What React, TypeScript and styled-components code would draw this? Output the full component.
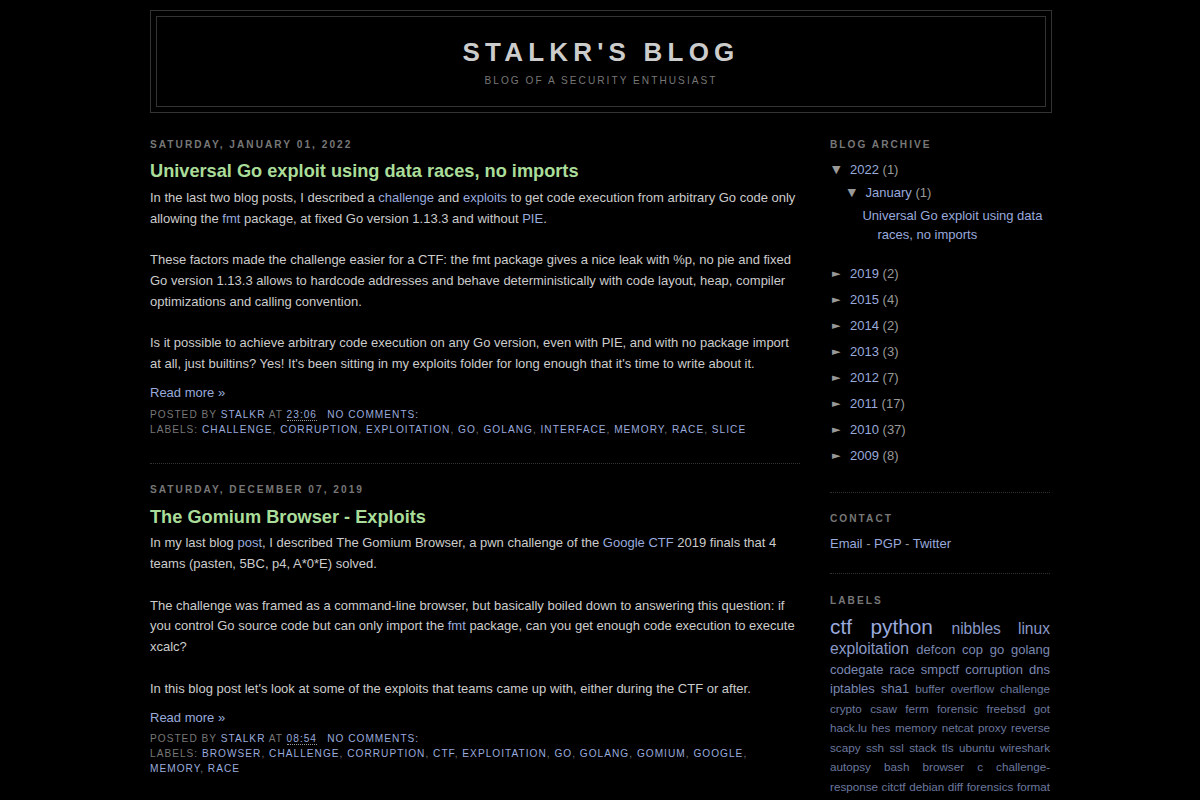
import React from "react";
import styled, { createGlobalStyle, css } from "styled-components";

const GlobalStyle = createGlobalStyle`
  html, body { margin: 0; padding: 0; background: #000; }
  body {
    color: #ccc;
    font-family: "Liberation Sans", Arial, sans-serif;
    font-size: 13px;
  }
  * { box-sizing: content-box; }
`;

const Page = styled.div`
  width: 900px;
  margin: 0 auto;
  padding: 10px;
  text-align: left;
`;

const HeaderWrapper = styled.header`
  width: 900px;
  margin: 0 0 9px;
  border: 1px solid #333;
`;

const HeaderInner = styled.div`
  margin: 5px;
  border: 1px solid #333;
  text-align: center;
  color: #ccc;
`;

const BlogTitle = styled.h1`
  margin: 5px 5px 0;
  padding: 15px 20px 6px;
  font-family: "Liberation Sans", Arial, sans-serif;
  font-size: 26px;
  font-weight: bold;
  line-height: 1.2em;
  letter-spacing: 0.2em;
  text-transform: uppercase;
  color: #ccc;
`;

const Description = styled.p`
  margin: 0 5px 5px;
  padding: 0 20px 13px;
  font-size: 10.14px;
  line-height: 1.4em;
  letter-spacing: 0.2em;
  text-transform: uppercase;
  color: #777;
`;

const Columns = styled.div`
  display: flex;
  justify-content: space-between;
  align-items: flex-start;
`;

const Main = styled.main`
  width: 650px;
`;

const Sidebar = styled.aside`
  width: 220px;
  color: #999;
  line-height: 1.5em;
`;

const DateHeader = styled.h2`
  margin: 1.5em 0 0.5em;
  font-size: 10.14px;
  font-weight: bold;
  line-height: 1.4em;
  letter-spacing: 0.2em;
  text-transform: uppercase;
  color: #777;
`;

const Post = styled.article`
  margin: 0.5em 0 1.5em;
  padding-bottom: 1.5em;
  border-bottom: 1px dotted #333;
`;

const PostTitle = styled.h3`
  margin: 0.25em 0 0;
  padding: 1px 0 3px;
  font-size: 18.2px;
  font-weight: bold;
  line-height: 1.4em;
  color: #aadd99;
`;

const PostBody = styled.div`
  margin: 0 0 0.75em;
  line-height: 1.6em;
`;

const Para = styled.p`
  margin: 0 0 1.6em;
  &:last-of-type { margin-bottom: 0; }
`;

const JumpLink = styled.div`
  margin-top: 8px;
`;

const Link = styled.a`
  color: #99aadd;
  text-decoration: none;
  cursor: pointer;
  &:hover { color: #aadd99; text-decoration: underline; }
`;

const PostFooter = styled.div`
  margin: -7px 0 6.5px;
  font-size: 10.14px;
  line-height: 15px;
  letter-spacing: 0.1em;
  text-transform: uppercase;
  color: #777;
`;

const FooterLine = styled.div``;

const Stamp = styled.abbr`
  text-decoration: none;
  border-bottom: 1px dotted #999;
`;

const CommentLink = styled(Link)`
  margin-left: 1em;
`;

const WidgetBox = styled.section`
  margin: 0 0 1.5em;
  padding: 0 0 1.5em;
  border-bottom: 1px dotted #333;
`;

const WidgetTitle = styled(DateHeader)`
  margin: 1.5em 0 0.75em;
`;

const ArchiveList = styled.ul`
  margin: 0;
  padding: 0;
  list-style: none;
`;

const ArchiveItem = styled.li<{ $level: 0 | 1 | 2 }>`
  margin: 0.25em 0;
  padding: 0 0 0.25em 15px;
  text-indent: -15px;
  line-height: 19.5px;
  ${(p) =>
    p.$level === 0 &&
    css`
      &:first-child { padding-top: 1px; }
    `}
  ${(p) =>
    p.$level === 1 &&
    css`
      padding-left: 1.2em;
    `}
  ${(p) =>
    p.$level === 2 &&
    css`
      padding-left: 1.3em;
    `}
`;

const Toggle = styled.span`
  display: inline-block;
  width: 20px;
  text-indent: 0;
  color: #999;
  font-family: "DejaVu Sans", sans-serif;
  font-size: 11px;
  line-height: 10px;
  vertical-align: 1px;
  padding-left: 2px;
  box-sizing: border-box;
`;

const Count = styled.span`
  color: #999;
`;

const Dash = styled.span`
  color: #999;
`;

const Cloud = styled.div`
  padding-top: 1px;
  text-align: justify;
`;

const sizeMap: Record<number, { size: string; opacity: number }> = {
  5: { size: "160%", opacity: 1 },
  4: { size: "120%", opacity: 0.9 },
  3: { size: "100%", opacity: 0.8 },
  2: { size: "90%", opacity: 0.7 },
  1: { size: "80%", opacity: 0.6 },
};

const CloudLabel = styled.span<{ $size: number }>`
  font-size: ${(p) => sizeMap[p.$size].size};
  opacity: ${(p) => sizeMap[p.$size].opacity};
`;

type Archive = { year: string; count: number };

const years: Archive[] = [
  { year: "2019", count: 2 },
  { year: "2015", count: 4 },
  { year: "2014", count: 2 },
  { year: "2013", count: 3 },
  { year: "2012", count: 7 },
  { year: "2011", count: 17 },
  { year: "2010", count: 37 },
  { year: "2009", count: 8 },
];

const cloud: [string, number][] = [
  ["ctf", 5],
  ["python", 5],
  ["nibbles", 4],
  ["linux", 4],
  ["exploitation", 4],
  ["defcon", 3],
  ["cop", 3],
  ["go", 3],
  ["golang", 3],
  ["codegate", 3],
  ["race", 3],
  ["smpctf", 3],
  ["corruption", 3],
  ["dns", 3],
  ["iptables", 3],
  ["sha1", 3],
  ["buffer overflow", 2],
  ["challenge", 2],
  ["crypto", 2],
  ["csaw", 2],
  ["ferm", 2],
  ["forensic", 2],
  ["freebsd", 2],
  ["got", 2],
  ["hack.lu", 2],
  ["hes", 2],
  ["memory", 2],
  ["netcat", 2],
  ["proxy", 2],
  ["reverse", 2],
  ["scapy", 2],
  ["ssh", 2],
  ["ssl", 2],
  ["stack", 2],
  ["tls", 2],
  ["ubuntu", 2],
  ["wireshark", 2],
  ["autopsy", 2],
  ["bash", 2],
  ["browser", 2],
  ["c", 2],
  ["challenge-response", 2],
  ["citctf", 2],
  ["debian", 2],
  ["diff", 2],
  ["forensics", 2],
  ["format", 2],
  ["gdb", 2],
  ["gomium", 2],
  ["google", 2],
  ["heap", 2],
  ["interface", 2],
  ["kernel", 2],
  ["libc", 2],
  ["slice", 2],
];

function Labels({ items }: { items: string[] }) {
  return (
    <>
      Labels:{" "}
      {items.map((l, i) => (
        <React.Fragment key={l}>
          <Link>{l}</Link>
          {i < items.length - 1 ? ", " : ""}
        </React.Fragment>
      ))}
    </>
  );
}

function Footer({ time, labels }: { time: string; labels: string[] }) {
  return (
    <PostFooter>
      <FooterLine>
        Posted by <Link>stalkr</Link> at{" "}
        <Link>
          <Stamp>{time}</Stamp>
        </Link>
        <CommentLink>No comments:</CommentLink>
      </FooterLine>
      <FooterLine>
        <Labels items={labels} />
      </FooterLine>
    </PostFooter>
  );
}

export default function App() {
  return (
    <>
      <GlobalStyle />
      <Page>
        <HeaderWrapper>
          <HeaderInner>
            <BlogTitle>stalkr's Blog</BlogTitle>
            <Description>Blog of a security enthusiast</Description>
          </HeaderInner>
        </HeaderWrapper>
        <Columns>
          <Main>
            <DateHeader>Saturday, January 01, 2022</DateHeader>
            <Post>
              <PostTitle>Universal Go exploit using data races, no imports</PostTitle>
              <PostBody>
                <Para>
                  In the last two blog posts, I described a <Link>challenge</Link> and{" "}
                  <Link>exploits</Link> to get code execution from arbitrary Go code only
                  allowing the <Link>fmt</Link> package, at fixed Go version 1.13.3 and
                  without <Link>PIE</Link>.
                </Para>
                <Para>
                  These factors made the challenge easier for a CTF: the fmt package gives a
                  nice leak with %p, no pie and fixed Go version 1.13.3 allows to hardcode
                  addresses and behave deterministically with code layout, heap, compiler
                  optimizations and calling convention.
                </Para>
                <Para>
                  Is it possible to achieve arbitrary code execution on any Go version, even
                  with PIE, and with no package import at all, just builtins? Yes! It's been
                  sitting in my exploits folder for long enough that it's time to write about
                  it.
                </Para>
                <JumpLink>
                  <Link>Read more »</Link>
                </JumpLink>
              </PostBody>
              <Footer
                time="23:06"
                labels={[
                  "challenge",
                  "corruption",
                  "exploitation",
                  "go",
                  "golang",
                  "interface",
                  "memory",
                  "race",
                  "slice",
                ]}
              />
            </Post>

            <DateHeader>Saturday, December 07, 2019</DateHeader>
            <Post>
              <PostTitle>The Gomium Browser - Exploits</PostTitle>
              <PostBody>
                <Para>
                  In my last blog <Link>post</Link>, I described The Gomium Browser, a pwn
                  challenge of the <Link>Google CTF</Link> 2019 finals that 4 teams (pasten,
                  5BC, p4, A*0*E) solved.
                </Para>
                <Para>
                  The challenge was framed as a command-line browser, but basically boiled
                  down to answering this question: if you control Go source code but can only
                  import the <Link>fmt</Link> package, can you get enough code execution to
                  execute xcalc?
                </Para>
                <Para>
                  In this blog post let's look at some of the exploits that teams came up
                  with, either during the CTF or after.
                </Para>
                <JumpLink>
                  <Link>Read more »</Link>
                </JumpLink>
              </PostBody>
              <Footer
                time="08:54"
                labels={[
                  "browser",
                  "challenge",
                  "corruption",
                  "ctf",
                  "exploitation",
                  "go",
                  "golang",
                  "gomium",
                  "google",
                  "memory",
                  "race",
                ]}
              />
            </Post>
          </Main>

          <Sidebar>
            <WidgetBox>
              <WidgetTitle>Blog Archive</WidgetTitle>
              <ArchiveList>
                <ArchiveItem $level={0}>
                  <Toggle>▼</Toggle>
                  <Link>2022</Link> <Count>(1)</Count>
                  <ArchiveList>
                    <ArchiveItem $level={1}>
                      <Toggle>▼</Toggle>
                      <Link>January</Link> <Count>(1)</Count>
                      <ArchiveList>
                        <ArchiveItem $level={2}>
                          <Link>Universal Go exploit using data races, no imports</Link>
                        </ArchiveItem>
                      </ArchiveList>
                    </ArchiveItem>
                  </ArchiveList>
                </ArchiveItem>
                {years.map((y) => (
                  <ArchiveItem $level={0} key={y.year}>
                    <Toggle>►</Toggle>
                    <Link>{y.year}</Link> <Count>({y.count})</Count>
                  </ArchiveItem>
                ))}
              </ArchiveList>
            </WidgetBox>

            <WidgetBox>
              <WidgetTitle>Contact</WidgetTitle>
              <div>
                <Link>Email</Link> <Dash>-</Dash> <Link>PGP</Link> <Dash>-</Dash>{" "}
                <Link>Twitter</Link>
              </div>
            </WidgetBox>

            <WidgetBox>
              <WidgetTitle>Labels</WidgetTitle>
              <Cloud>
                {cloud.map(([name, size]) => (
                  <CloudLabel $size={size} key={name}>
                    <Link>{name}</Link>{" "}
                  </CloudLabel>
                ))}
              </Cloud>
            </WidgetBox>
          </Sidebar>
        </Columns>
      </Page>
    </>
  );
}
